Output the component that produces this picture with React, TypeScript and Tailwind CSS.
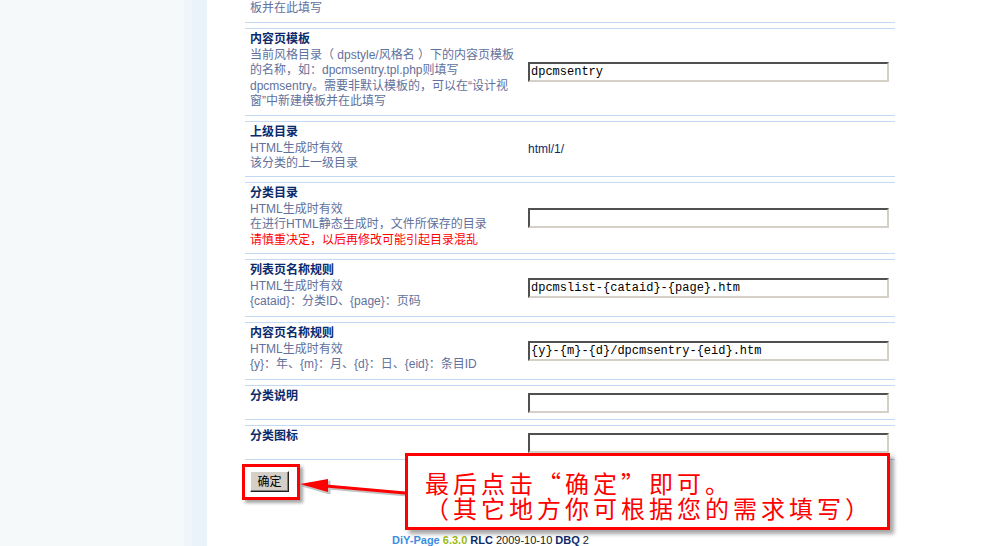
import React from "react";

type Row = {
  title: string;
  lines?: string[];
  warn?: string;
  value?: string;
  text?: string;
  h: string;
};

const rows: Row[] = [
  {
    title: "内容页模板",
    lines: [
      "当前风格目录（ dpstyle/风格名 ）下的内容页模板",
      "的名称，如：dpcmsentry.tpl.php则填写",
      "dpcmsentry。需要非默认模板的，可以在“设计视",
      "窗”中新建模板并在此填写",
    ],
    value: "dpcmsentry",
    h: "h-[88px]",
  },
  {
    title: "上级目录",
    lines: ["HTML生成时有效", "该分类的上一级目录"],
    text: "html/1/",
    h: "h-[56px]",
  },
  {
    title: "分类目录",
    lines: ["HTML生成时有效", "在进行HTML静态生成时，文件所保存的目录"],
    warn: "请慎重决定，以后再修改可能引起目录混乱",
    value: "",
    h: "h-[72px]",
  },
  {
    title: "列表页名称规则",
    lines: ["HTML生成时有效", "{cataid}：分类ID、{page}：页码"],
    value: "dpcmslist-{cataid}-{page}.htm",
    h: "h-[58px]",
  },
  {
    title: "内容页名称规则",
    lines: ["HTML生成时有效", "{y}：年、{m}：月、{d}：日、{eid}：条目ID"],
    value: "{y}-{m}-{d}/dpcmsentry-{eid}.htm",
    h: "h-[58px]",
  },
  { title: "分类说明", value: "", h: "h-[35px]" },
  { title: "分类图标", value: "", h: "h-[35px]" },
];

const Field = ({ value }: { value: string }) => (
  <input
    readOnly
    value={value}
    className="w-[361px] h-[20px] bg-white border-2 border-t-[#505050] border-l-[#505050] border-b-[#d4d0c8] border-r-[#d4d0c8] pl-[1px] text-[12px] text-black outline-none font-['Liberation_Mono',monospace]"
  />
);

export default function App() {
  return (
    <div className="relative w-[985px] h-[546px] overflow-hidden bg-[linear-gradient(to_right,#f5f9fa_0px,#f5f9fa_184px,#eff5fa_184px,#eff5fa_192px,#eaf2fa_192px,#eaf2fa_207px,#ffffff_207px)] font-['Liberation_Sans','Noto_Sans_CJK_SC',sans-serif] text-[12px]">
      <div className="pl-[245px] w-[895px]">
        <div className="flex flex-col gap-[5px]">
          {/* tail of previous row */}
          <div className="h-[23px] border-b border-[#c4daf2] pl-[5px] leading-[16px] text-[#5f719c]">
            板并在此填写
          </div>

          {rows.map((r) => (
            <div
              key={r.title}
              className={`flex ${r.h} border-y border-[#c4daf2]`}
            >
              <div className="w-[283px] pl-[5px] pt-[2px] whitespace-nowrap">
                <div className="leading-[17px] font-bold text-[#0b2a6b]">{r.title}</div>
                {r.lines?.map((l) => (
                  <div key={l} className="leading-[15.3px] text-[#5f719c]">
                    {l}
                  </div>
                ))}
                {r.warn && (
                  <div className="leading-[15.3px] text-[#ff0000]">{r.warn}</div>
                )}
              </div>
              <div className="flex items-center">
                {r.value !== undefined && <Field value={r.value} />}
                {r.text && <span className="text-[#0b2a6b]">{r.text}</span>}
              </div>
            </div>
          ))}
        </div>

        <div className="pl-[5px] pt-[11px]">
          <button className="w-[39px] h-[21px] bg-[#d4d0c8] border border-t-white border-l-white border-b-[#202020] border-r-[#202020] shadow-[inset_-1px_-1px_0_#808080] text-[12px] text-black leading-none">
            确定
          </button>
        </div>
      </div>

      <div className="mt-[41px] pr-[4px] text-center text-[11px] leading-[14px] whitespace-nowrap font-['Liberation_Sans',sans-serif]">
        <b className="text-[#3a8de0]">DiY-Page</b> <b className="text-[#99bb11]">6.3.0</b>{" "}
        <b className="text-[#0b2a6b]">RLC</b> <span className="text-[#222]">2009-10-10</span>{" "}
        <b className="text-[#0b2a6b]">DBQ</b> <span className="text-[#222]">2</span>
      </div>

      {/* annotation overlay */}
      <div className="absolute left-[242px] top-[464px] w-[58px] h-[36px] border-[3px] border-[#ff0000] shadow-[3px_3px_3px_rgba(0,0,0,0.35)]" />

      <svg
        className="absolute left-[296px] top-[476px]"
        width="114"
        height="24"
        viewBox="0 0 114 24"
      >
        <g transform="translate(2,2)" fill="#9a9a9a" stroke="#9a9a9a" opacity="0.6">
          <line x1="109" y1="17" x2="30" y2="10" strokeWidth="3" />
          <polygon points="4,8 32,3 32,16" />
        </g>
        <line x1="109" y1="17" x2="30" y2="10" stroke="#ff0000" strokeWidth="3" />
        <polygon points="4,8 32,3 32,16" fill="#ff0000" />
      </svg>

      <div className="absolute left-[405px] top-[453px] w-[485px] h-[77px] border-[3px] border-[#ff0000] bg-white shadow-[4px_4px_4px_rgba(0,0,0,0.35)] pl-[17px] pt-[14px] text-[#ff0000] text-[24px] leading-[25px] tracking-[4px] whitespace-nowrap font-['Noto_Sans_CJK_SC',sans-serif]">
        <div>最后点击“确定”即可。</div>
        <div>（其它地方你可根据您的需求填写）</div>
      </div>
    </div>
  );
}
